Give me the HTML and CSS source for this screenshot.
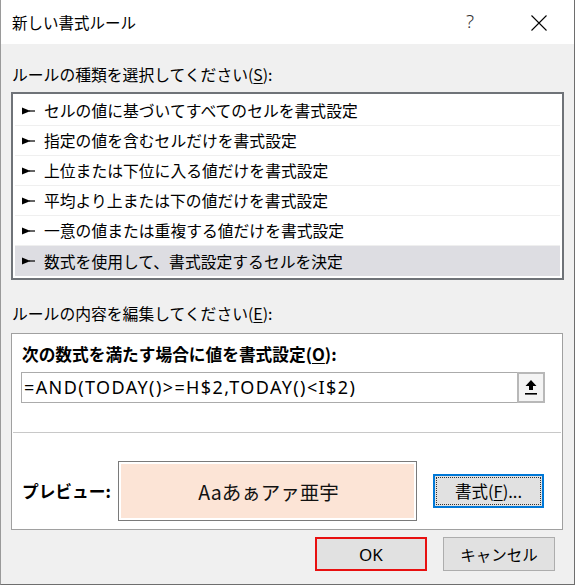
FILE: index.html
```html
<!DOCTYPE html>
<html lang="ja">
<head>
<meta charset="utf-8">
<title>新しい書式ルール</title>
<link rel="stylesheet" href="styles.css">
</head>
<body>
<div class="window">
  <div class="titlebar">
    <div class="title">新しい書式ルール</div>
    <div class="help">?</div>
    <div class="close">
      <svg width="16" height="16" viewBox="0 0 16 16"><path d="M0.5 0.5L15.5 15.5M15.5 0.5L0.5 15.5" stroke="#000" stroke-width="1.1" fill="none"/></svg>
    </div>
  </div>
  <div class="content">
    <div class="label label-type">ルールの種類を選択してください(<u>S</u>):</div>
    <div class="list">
      <div class="row"><svg class="arrow" width="13" height="8" viewBox="0 0 13 8"><path d="M0 0.5L8.5 4L0 7.5z" fill="#000"/><rect x="7" y="3.4" width="6" height="1.2" fill="#000"/></svg><span>セルの値に基づいてすべてのセルを書式設定</span></div>
      <div class="row"><svg class="arrow" width="13" height="8" viewBox="0 0 13 8"><path d="M0 0.5L8.5 4L0 7.5z" fill="#000"/><rect x="7" y="3.4" width="6" height="1.2" fill="#000"/></svg><span>指定の値を含むセルだけを書式設定</span></div>
      <div class="row"><svg class="arrow" width="13" height="8" viewBox="0 0 13 8"><path d="M0 0.5L8.5 4L0 7.5z" fill="#000"/><rect x="7" y="3.4" width="6" height="1.2" fill="#000"/></svg><span>上位または下位に入る値だけを書式設定</span></div>
      <div class="row"><svg class="arrow" width="13" height="8" viewBox="0 0 13 8"><path d="M0 0.5L8.5 4L0 7.5z" fill="#000"/><rect x="7" y="3.4" width="6" height="1.2" fill="#000"/></svg><span>平均より上または下の値だけを書式設定</span></div>
      <div class="row"><svg class="arrow" width="13" height="8" viewBox="0 0 13 8"><path d="M0 0.5L8.5 4L0 7.5z" fill="#000"/><rect x="7" y="3.4" width="6" height="1.2" fill="#000"/></svg><span>一意の値または重複する値だけを書式設定</span></div>
      <div class="row selected"><svg class="arrow" width="13" height="8" viewBox="0 0 13 8"><path d="M0 0.5L8.5 4L0 7.5z" fill="#000"/><rect x="7" y="3.4" width="6" height="1.2" fill="#000"/></svg><span>数式を使用して、書式設定するセルを決定</span></div>
    </div>
    <div class="label label-edit">ルールの内容を編集してください(<u>E</u>):</div>
    <div class="panel">
      <div class="bold-label">次の数式を満たす場合に値を書式設定(<u>O</u>):</div>
      <div class="formula">
        <div class="formula-text">=AND(TODAY()&gt;=H$2,TODAY()&lt;I$2)</div>
        <div class="collapse-btn">
          <svg width="12" height="15" viewBox="0 0 12 15"><path d="M6 0L11.5 6H8V10H4V6H0.5z" fill="#000"/><rect x="0" y="13" width="12" height="1.6" fill="#000"/></svg>
        </div>
      </div>
      <div class="separator"></div>
      <div class="preview-row">
        <div class="bold-label preview-label">プレビュー:</div>
        <div class="preview-box"><div class="preview-inner">Aaあぁアァ亜宇</div></div>
        <div class="btn btn-format"><div class="focus">書式(<u>F</u>)...</div></div>
      </div>
    </div>
    <div class="buttons">
      <div class="btn btn-ok">OK</div>
      <div class="btn btn-cancel">キャンセル</div>
    </div>
  </div>
</div>
</body>
</html>
```
FILE: styles.css
```css
html, body {
  margin: 0;
  padding: 0;
  background: #f0f0f0;
}
body {
  font-family: "Noto Sans CJK JP", "Noto Sans", sans-serif;
  color: #000;
}
.window {
  width: 575px;
  height: 585px;
  box-sizing: border-box;
  border-left: 1px solid #9a9a9a;
  border-right: 1px solid #6e6e6e;
  border-bottom: 1px solid #6e6e6e;
  background: #f0f0f0;
  display: flex;
  flex-direction: column;
}
.titlebar {
  height: 44px;
  background: #fff;
  display: flex;
  align-items: center;
  flex-shrink: 0;
}
.title {
  flex: 1;
  padding-left: 11px;
  font-size: 15.5px;
  line-height: 20px;
  margin-top: -1px;
}
.help {
  font-family: "Noto Sans", sans-serif;
  font-size: 19px;
  font-weight: 300;
  color: #333;
  width: 12px;
  margin-right: 53px;
  margin-top: -2px;
}
.close {
  width: 16px;
  height: 16px;
  margin-right: 27px;
  margin-top: 1px;
}
.close svg { display: block; }
.content {
  padding: 21px 10px 0 10px;
  display: flex;
  flex-direction: column;
}
.label {
  font-size: 15.8px;
  line-height: 20px;
  padding-left: 1px;
}
.label u, .bold-label u, .btn u {
  text-underline-offset: 2px;
}
.label-type { margin-bottom: 7px; }
.list {
  height: 188px;
  box-sizing: border-box;
  border: 2px solid #6f7378;
  background: #fff;
  padding: 2px;
}
.row {
  height: 30px;
  box-sizing: border-box;
  border-bottom: 1px solid #efefef;
  display: flex;
  align-items: center;
  font-size: 15.8px;
  padding-left: 7px;
}
.row .arrow {
  flex-shrink: 0;
  margin-right: 9px;
}
.row.selected {
  background: #dddde2;
  border-bottom: none;
}
.label-edit {
  margin-top: 24px;
  margin-bottom: 9px;
}
.panel {
  height: 197px;
  box-sizing: border-box;
  border: 1px solid #a0a0a0;
  background: #fff;
  margin-right: 1px;
  padding: 10px 17px 0 9px;
  display: flex;
  flex-direction: column;
}
.bold-label {
  font-weight: bold;
  font-size: 16.7px;
  line-height: 20px;
  padding-left: 1px;
}
.formula {
  margin-top: 8px;
  height: 31px;
  box-sizing: border-box;
  border: 1px solid #ababab;
  display: flex;
  align-items: stretch;
}
.formula-text {
  flex: 1;
  font-family: "Noto Sans", sans-serif;
  font-size: 18px;
  line-height: 28px;
  padding-left: 2px;
  letter-spacing: 1.4px;
}
.collapse-btn {
  width: 28px;
  box-sizing: border-box;
  border: 2px solid #b8b8b8;
  margin: -1px -1px -1px 0;
  background: #f4f4f4;
  display: flex;
  align-items: center;
  justify-content: center;
}
.collapse-btn svg { display: block; }
.separator {
  height: 1px;
  background: #c8c8c8;
  margin: 29px -16px 0 -8px;
}
.preview-row {
  margin-top: 28px;
  display: flex;
  align-items: center;
}
.preview-label {
  width: 96px;
  flex-shrink: 0;
}
.preview-box {
  width: 299px;
  height: 60px;
  box-sizing: border-box;
  border: 1px solid #7a7a7a;
  padding: 2px;
  background: #fff;
  flex-shrink: 0;
}
.preview-inner {
  height: 100%;
  background: #fce4d6;
  display: flex;
  align-items: center;
  justify-content: center;
  font-size: 19.5px;
  color: #111;
  padding-left: 2px;
  box-sizing: border-box;
}
.btn {
  box-sizing: border-box;
  background: #e1e1e1;
  font-size: 16px;
  display: flex;
  align-items: center;
  justify-content: center;
}
.btn-format {
  margin-left: 16px;
  width: 111px;
  height: 34px;
  border: 2px solid #0078d7;
  padding: 1px;
}
.btn-format .focus {
  width: 100%;
  height: 100%;
  box-sizing: border-box;
  border: 1px dotted #333;
  display: flex;
  align-items: center;
  justify-content: center;
  font-size: 16.5px;
}
.buttons {
  margin-top: 7px;
  display: flex;
  justify-content: flex-end;
  gap: 16px;
  padding-right: 9px;
}
.btn-ok, .btn-cancel {
  width: 112px;
  height: 34px;
}
.btn-ok {
  border: 2px solid #e81010;
  font-family: "Noto Sans", sans-serif;
  font-size: 17px;
}
.btn-cancel {
  border: 1px solid #adadad;
  font-size: 15.5px;
}
```
